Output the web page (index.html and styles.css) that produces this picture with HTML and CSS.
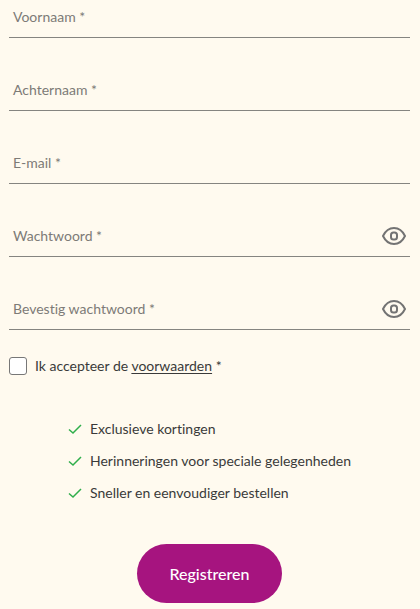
FILE: index.html
```html
<!DOCTYPE html>
<html lang="nl">
<head>
<meta charset="utf-8">
<meta name="viewport" content="width=device-width, initial-scale=1">
<title>Registreren</title>
<link rel="stylesheet" href="styles.css">
</head>
<body>
<form class="form">
  <div class="fields">
    <div class="field">
      <input id="voornaam" type="text" required>
      <label for="voornaam">Voornaam *</label>
    </div>
    <div class="field">
      <input id="achternaam" type="text" required>
      <label for="achternaam">Achternaam *</label>
    </div>
    <div class="field">
      <input id="email" type="email" required>
      <label for="email">E-mail *</label>
    </div>
    <div class="field">
      <input id="wachtwoord" type="password" required>
      <label for="wachtwoord">Wachtwoord *</label>
      <button class="reveal" type="button" aria-label="Toon wachtwoord">
        <svg viewBox="0 0 24 20"><path d="M1 10C3.500 4.800 7.500 2 12 2s8.500 2.800 11 8c-2.500 5.200-6.500 8-11 8S3.500 15.200 1 10z"/><rect x="9" y="6.500" width="6" height="7" rx="2.500"/></svg>
      </button>
    </div>
    <div class="field">
      <input id="bevestig" type="password" required>
      <label for="bevestig">Bevestig wachtwoord *</label>
      <button class="reveal" type="button" aria-label="Toon wachtwoord">
        <svg viewBox="0 0 24 20"><path d="M1 10C3.500 4.800 7.500 2 12 2s8.500 2.800 11 8c-2.500 5.200-6.500 8-11 8S3.500 15.200 1 10z"/><rect x="9" y="6.500" width="6" height="7" rx="2.500"/></svg>
      </button>
    </div>
  </div>
  <div class="terms">
    <input id="akkoord" type="checkbox" required>
    <label for="akkoord">Ik accepteer de <a href="#">voorwaarden</a> *</label>
  </div>
  <ul class="benefits">
    <li><svg viewBox="0 0 14 12"><path d="M1 6.500l4 3.500 8-8"/></svg>Exclusieve kortingen</li>
    <li><svg viewBox="0 0 14 12"><path d="M1 6.500l4 3.500 8-8"/></svg>Herinneringen voor speciale gelegenheden</li>
    <li><svg viewBox="0 0 14 12"><path d="M1 6.500l4 3.500 8-8"/></svg>Sneller en eenvoudiger bestellen</li>
  </ul>
  <button class="submit" type="submit">Registreren</button>
</form>
</body>
</html>
```
FILE: styles.css
```css
* {
  box-sizing: border-box;
}

body {
  margin: 0;
  background: #fffaef;
  color: #3a3a3a;
  font-family: Lato, "Liberation Sans", sans-serif;
  font-size: 14px;
  font-variant-ligatures: none;
  line-height: 20px;
}

.form {
  display: flex;
  flex-direction: column;
  padding: 0 10px 6px 9px;
}

.fields {
  display: grid;
  gap: 35px;
}

.field {
  display: grid;
  grid-template-columns: 1fr auto;
  align-items: center;
  padding-bottom: 3px;
  border-bottom: 1px solid #858480;
}

.field input {
  grid-area: 1 / 1;
  width: 100%;
  height: 34px;
  padding: 0 4px;
  border: 0;
  outline: 0;
  background: transparent;
  font: inherit;
}

.field label {
  grid-area: 1 / 1;
  padding-left: 4px;
  color: #7d7b77;
  pointer-events: none;
}

.field input:valid + label {
  visibility: hidden;
}

.reveal {
  display: flex;
  margin: 0 4px 0 0;
  padding: 0;
  border: 0;
  background: none;
}

.reveal svg {
  width: 24px;
  height: 20px;
  fill: none;
  stroke: #737373;
  stroke-width: 2;
}

.terms {
  display: flex;
  align-items: center;
  gap: 8px;
  margin-top: 26px;
}

.terms input {
  appearance: none;
  width: 18px;
  height: 18px;
  margin: 0;
  border: 1px solid #777;
  border-radius: 3px;
  background: #fff;
}

.terms input:checked {
  background: #a6147f;
}

.terms a {
  color: inherit;
  text-underline-offset: 2px;
}

.benefits {
  display: grid;
  gap: 12px;
  margin: 43px auto 41px;
  padding: 0;
  list-style: none;
}

.benefits li {
  display: flex;
  align-items: center;
  gap: 8px;
}

.benefits svg {
  width: 14px;
  height: 12px;
  fill: none;
  stroke: #2fae4b;
  stroke-width: 1.5;
}

.submit {
  align-self: center;
  padding: 18px 32px;
  border: 0;
  border-radius: 30px;
  background: #a6147f;
  color: #fff;
  font: 500 16px/23px Lato, "Liberation Sans", sans-serif;
}
```
